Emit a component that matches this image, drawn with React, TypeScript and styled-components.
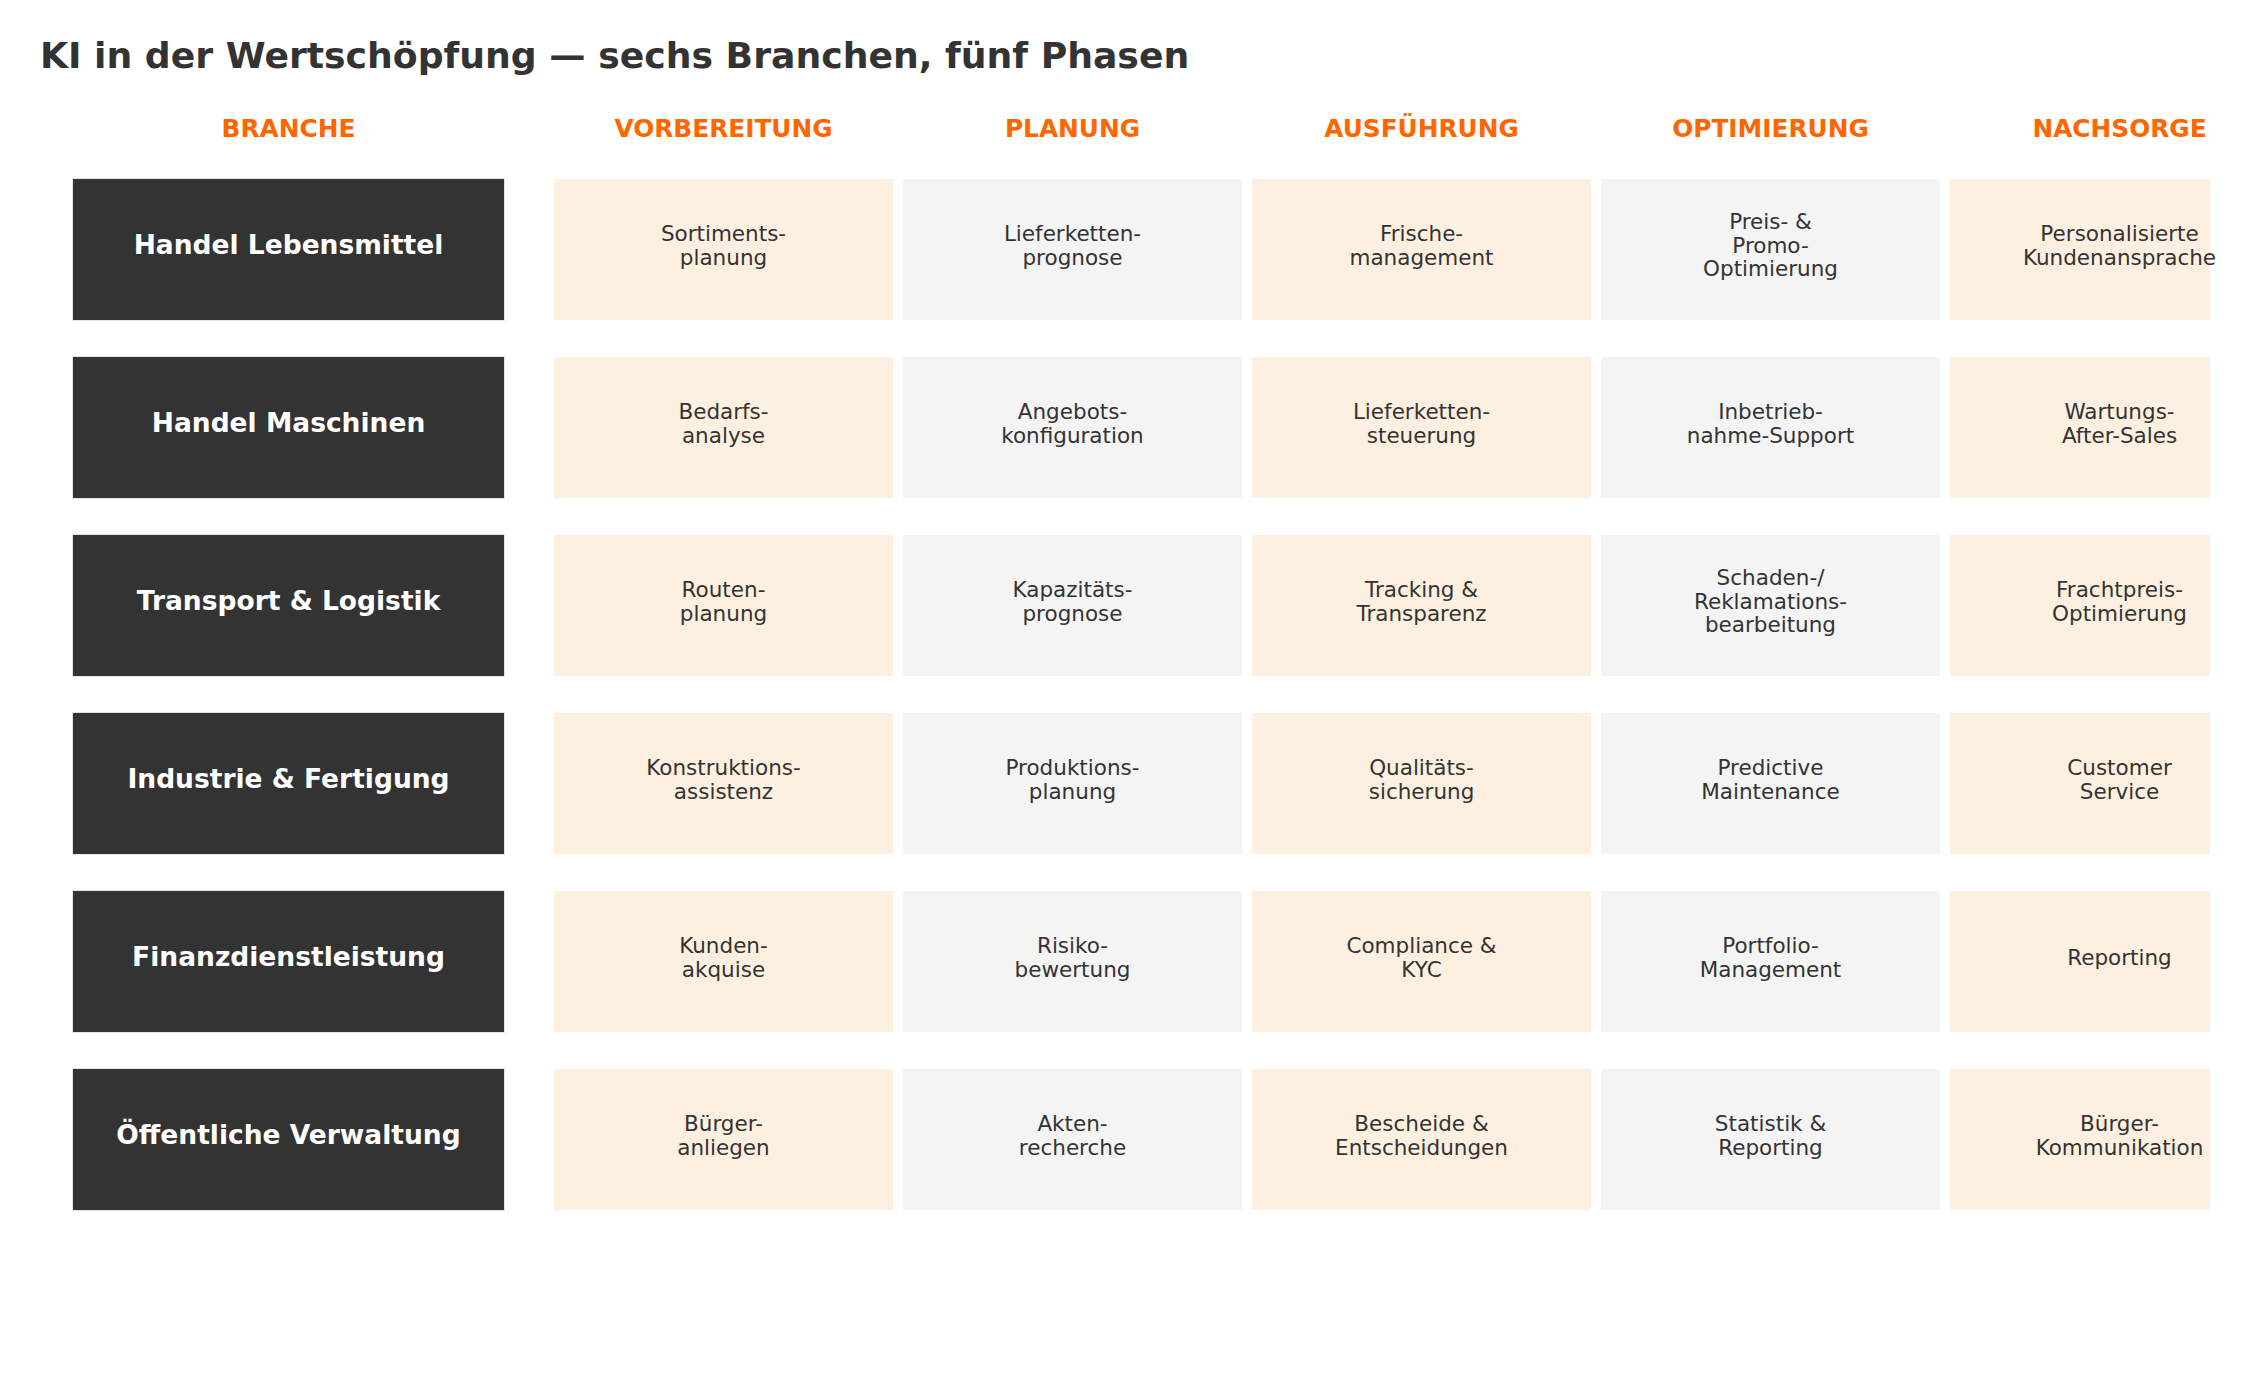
import React from "react";
import styled, { createGlobalStyle } from "styled-components";

const GlobalStyle = createGlobalStyle`
  html, body {
    margin: 0;
    padding: 0;
    background: #ffffff;
    overflow: hidden;
  }
  body {
    font-family: "DejaVu Sans", "Liberation Sans", sans-serif;
    color: #333333;
  }
`;

const Page = styled.div`
  width: 2254px;
  height: 1381px;
  overflow: hidden;
  background: #ffffff;
  padding-top: 35px;
  box-sizing: border-box;
`;

const Title = styled.h1`
  margin: 0 0 0 40px;
  font-family: "DejaVu Sans", sans-serif;
  font-weight: 700;
  font-size: 36.2px;
  line-height: 42px;
  color: #333333;
  white-space: nowrap;
`;

const Board = styled.div`
  display: flex;
  flex-direction: column;
  gap: 37px;
  padding-left: 73px;
  margin-top: 38px;
`;

const HeaderRow = styled.div`
  display: flex;
  align-items: center;
  height: 28px;
  margin-bottom: -1px;
`;

const Row = styled.div`
  display: flex;
  align-items: stretch;
  height: 141px;
`;

const PhaseGroup = styled.div`
  display: flex;
  gap: 10px;
  flex: 0 0 auto;
`;

const HeaderText = styled.div<{ $wide?: boolean }>`
  flex: 0 0 ${(p) => (p.$wide ? "431px" : "339px")};
  margin-right: ${(p) => (p.$wide ? "50px" : "0")};
  text-align: center;
  font-family: "DejaVu Sans", sans-serif;
  font-weight: 700;
  font-size: 24.8px;
  line-height: 28px;
  color: #ff6600;
  white-space: nowrap;
`;

const BranchCell = styled.div`
  flex: 0 0 431px;
  margin-right: 50px;
  background: #333333;
  outline: 1px solid #e2e2e2;
  display: flex;
  align-items: center;
  justify-content: center;
  padding-bottom: 11px;
  box-sizing: border-box;
  color: #ffffff;
  font-family: "DejaVu Sans", sans-serif;
  font-weight: 700;
  font-size: 26.5px;
  white-space: nowrap;
`;

const PhaseCell = styled.div<{ $tone: "warm" | "cool"; $visible?: number }>`
  flex: 0 0 339px;
  height: 141px;
  display: flex;
  align-items: center;
  justify-content: center;
  padding-bottom: 8px;
  box-sizing: border-box;
  background: ${(p) => {
    const c = p.$tone === "warm" ? "#fef0e0" : "#f4f4f4";
    return p.$visible
      ? `linear-gradient(to right, ${c} ${p.$visible}px, transparent ${p.$visible}px)`
      : c;
  }};
  font-family: "DejaVu Sans", sans-serif;
  font-size: 21.5px;
  line-height: 23.5px;
  color: #333333;
  text-align: center;
  white-space: pre-line;
`;

const phases = ["VORBEREITUNG", "PLANUNG", "AUSFÜHRUNG", "OPTIMIERUNG", "NACHSORGE"];

const rows: { branch: string; items: string[] }[] = [
  {
    branch: "Handel Lebensmittel",
    items: [
      "Sortiments-\nplanung",
      "Lieferketten-\nprognose",
      "Frische-\nmanagement",
      "Preis- &\nPromo-\nOptimierung",
      "Personalisierte\nKundenansprache",
    ],
  },
  {
    branch: "Handel Maschinen",
    items: [
      "Bedarfs-\nanalyse",
      "Angebots-\nkonfiguration",
      "Lieferketten-\nsteuerung",
      "Inbetrieb-\nnahme-Support",
      "Wartungs-\nAfter-Sales",
    ],
  },
  {
    branch: "Transport & Logistik",
    items: [
      "Routen-\nplanung",
      "Kapazitäts-\nprognose",
      "Tracking &\nTransparenz",
      "Schaden-/\nReklamations-\nbearbeitung",
      "Frachtpreis-\nOptimierung",
    ],
  },
  {
    branch: "Industrie & Fertigung",
    items: [
      "Konstruktions-\nassistenz",
      "Produktions-\nplanung",
      "Qualitäts-\nsicherung",
      "Predictive\nMaintenance",
      "Customer\nService",
    ],
  },
  {
    branch: "Finanzdienstleistung",
    items: [
      "Kunden-\nakquise",
      "Risiko-\nbewertung",
      "Compliance &\nKYC",
      "Portfolio-\nManagement",
      "Reporting",
    ],
  },
  {
    branch: "Öffentliche Verwaltung",
    items: [
      "Bürger-\nanliegen",
      "Akten-\nrecherche",
      "Bescheide &\nEntscheidungen",
      "Statistik &\nReporting",
      "Bürger-\nKommunikation",
    ],
  },
];

export default function App() {
  return (
    <Page>
      <GlobalStyle />
      <Title>KI in der Wertschöpfung — sechs Branchen, fünf Phasen</Title>
      <Board>
        <HeaderRow>
          <HeaderText $wide>BRANCHE</HeaderText>
          <PhaseGroup>
            {phases.map((p) => (
              <HeaderText key={p}>{p}</HeaderText>
            ))}
          </PhaseGroup>
        </HeaderRow>
        {rows.map((r) => (
          <Row key={r.branch}>
            <BranchCell>{r.branch}</BranchCell>
            <PhaseGroup>
              {r.items.map((it, i) => (
                <PhaseCell
                  key={i}
                  $tone={i % 2 === 0 ? "warm" : "cool"}
                  $visible={i === 4 ? 260 : undefined}
                >
                  {it}
                </PhaseCell>
              ))}
            </PhaseGroup>
          </Row>
        ))}
      </Board>
    </Page>
  );
}
